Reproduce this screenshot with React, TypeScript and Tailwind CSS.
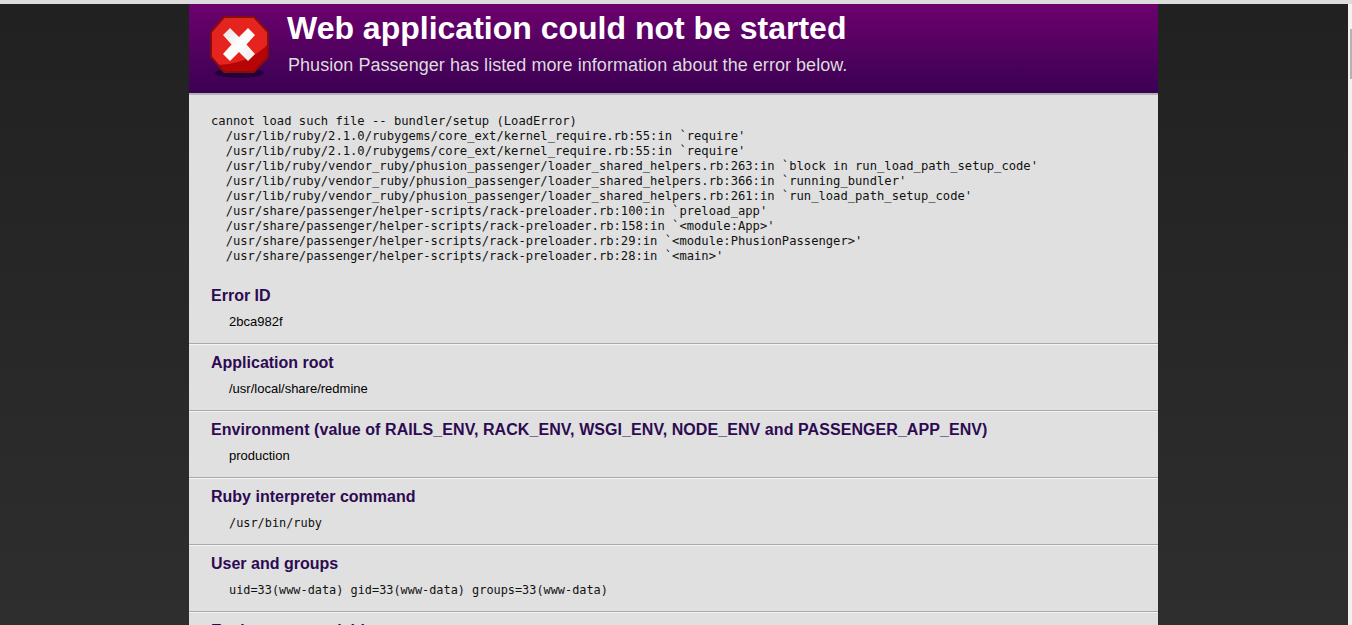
const sections = [
  { title: 'Error ID', value: '2bca982f', mono: false, wide: false },
  { title: 'Application root', value: '/usr/local/share/redmine', mono: false, wide: false },
  { title: 'Environment (value of RAILS_ENV, RACK_ENV, WSGI_ENV, NODE_ENV and PASSENGER_APP_ENV)', value: 'production', mono: false, wide: true },
  { title: 'Ruby interpreter command', value: '/usr/bin/ruby', mono: true, wide: false },
  { title: 'User and groups', value: 'uid=33(www-data) gid=33(www-data) groups=33(www-data)', mono: true, wide: false },
  { title: 'Environment variables', value: '', mono: true, wide: false },
];

const backtrace = `cannot load such file -- bundler/setup (LoadError)
  /usr/lib/ruby/2.1.0/rubygems/core_ext/kernel_require.rb:55:in \`require'
  /usr/lib/ruby/2.1.0/rubygems/core_ext/kernel_require.rb:55:in \`require'
  /usr/lib/ruby/vendor_ruby/phusion_passenger/loader_shared_helpers.rb:263:in \`block in run_load_path_setup_code'
  /usr/lib/ruby/vendor_ruby/phusion_passenger/loader_shared_helpers.rb:366:in \`running_bundler'
  /usr/lib/ruby/vendor_ruby/phusion_passenger/loader_shared_helpers.rb:261:in \`run_load_path_setup_code'
  /usr/share/passenger/helper-scripts/rack-preloader.rb:100:in \`preload_app'
  /usr/share/passenger/helper-scripts/rack-preloader.rb:158:in \`<module:App>'
  /usr/share/passenger/helper-scripts/rack-preloader.rb:29:in \`<module:PhusionPassenger>'
  /usr/share/passenger/helper-scripts/rack-preloader.rb:28:in \`<main>'`;

const octagon = '14,1 44,1 58,16 58,41 44,56 14,56 1,41 1,16';

const ErrorIcon = () => (
  <svg width="60" height="64" viewBox="0 0 60 64" className="shrink-0">
    <defs>
      <clipPath id="stop-clip">
        <polygon points={octagon} />
      </clipPath>
      <linearGradient id="cross-fill" x1="0" y1="0" x2="1" y2="1">
        <stop offset="0" stopColor="#e4e0e0" />
        <stop offset="0.5" stopColor="#ffffff" />
        <stop offset="1" stopColor="#efeaea" />
      </linearGradient>
    </defs>
    <ellipse cx="29.5" cy="57" rx="24.5" ry="5" fill="#23003a" />
    <polygon points={octagon} fill="#e6241f" />
    <path d="M2 49 C25 50 46 42 59 27 V60 H2 Z" fill="#b70404" clipPath="url(#stop-clip)" />
    <polygon points={octagon} fill="none" stroke="#850d0d" strokeWidth="2" />
    <path
      d="M20 12 L29 21 L38 12 L45 19 L36.5 28.5 L45 38 L38 45 L29 36 L20 45 L13 38 L21.5 28.5 L13 19 Z"
      fill="url(#cross-fill)"
    />
  </svg>
);

export default function App() {
  return (
    <div className="relative flex h-[625px] flex-col overflow-hidden bg-[#f1f1f1] font-['Liberation_Sans',Arial,sans-serif]">
      <div className="h-1 shrink-0 bg-[#dcdcdc]" />
      <div className="mr-1 flex min-h-0 flex-1 bg-gradient-to-b from-[#212121] to-[#2e2e2e]">
        <div className="ml-[189px] w-[969px] shrink-0 bg-[#e0e0e0]">
          <div className="flex h-[89px] bg-gradient-to-b from-[#6d006e] to-[#3b0053] pl-[21px] pt-3">
            <ErrorIcon />
            <div className="ml-[17px]">
              <h1 className="-mt-[6px] text-[32px] leading-[37px] font-bold text-white">
                Web application could not be started
              </h1>
              <p className="mt-2 ml-px text-[18px] leading-[21px] tracking-[0.045px] text-[#dcdcdc]">
                Phusion Passenger has listed more information about the error below.
              </p>
            </div>
          </div>
          <div className="h-0.5 bg-[#b5b3b5]" />

          <pre className="mt-[19px] mb-[13px] ml-[22px] font-['DejaVu_Sans_Mono',monospace] text-[12.17px] leading-[15px] text-[#111]">
            {backtrace}
          </pre>

          {sections.map((s, i) => (
            <section
              key={s.title}
              className={`h-[67px] border-t border-b border-b-[#a9a9a9] px-[22px] pt-2 ${
                i === 0 ? 'border-t-transparent' : 'border-t-[#f4f4f4]'
              }`}
            >
              <h2
                className={`text-base leading-[19px] font-bold text-[#2d0a52] ${
                  s.wide ? 'tracking-[0.07px]' : ''
                }`}
              >
                {s.title}
              </h2>
              <div
                className={
                  s.mono
                    ? "mt-2 ml-[18px] font-['DejaVu_Sans_Mono',monospace] text-[11.88px] leading-[19px] text-[#111]"
                    : 'mt-[7px] ml-[18px] text-[13px] leading-[19px] text-black'
                }
              >
                {s.value}
              </div>
            </section>
          ))}
        </div>
      </div>
      <div className="absolute top-[29px] right-0 h-[50px] w-0.5 bg-[#b4b4b4]" />
    </div>
  );
}
